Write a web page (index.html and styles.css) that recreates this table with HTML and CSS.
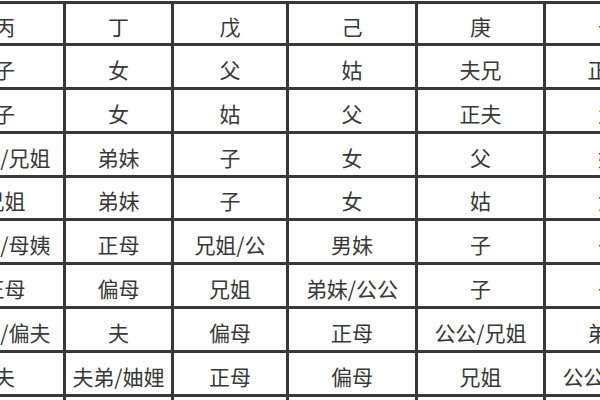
FILE: index.html
```html
<!DOCTYPE html>
<html lang="zh">
<head>
<meta charset="utf-8">
<link rel="stylesheet" href="styles.css">
</head>
<body>
<div class="frame">
  <div class="grid">
    <div class="cell">丙</div><div class="cell">丁</div><div class="cell">戊</div><div class="cell">己</div><div class="cell">庚</div><div class="cell">辛</div>
    <div class="cell">子</div><div class="cell">女</div><div class="cell">父</div><div class="cell">姑</div><div class="cell">夫兄</div><div class="cell">正夫</div>
    <div class="cell">子</div><div class="cell">女</div><div class="cell">姑</div><div class="cell">父</div><div class="cell">正夫</div><div class="cell">父</div>
    <div class="cell">弟妹/兄姐</div><div class="cell">弟妹</div><div class="cell">子</div><div class="cell">女</div><div class="cell">父</div><div class="cell">姑</div>
    <div class="cell">兄姐</div><div class="cell">弟妹</div><div class="cell">子</div><div class="cell">女</div><div class="cell">姑</div><div class="cell">女</div>
    <div class="cell">偏母/母姨</div><div class="cell">正母</div><div class="cell">兄姐/公</div><div class="cell">男妹</div><div class="cell">子</div><div class="cell">子</div>
    <div class="cell">正母</div><div class="cell">偏母</div><div class="cell">兄姐</div><div class="cell">弟妹/公公</div><div class="cell">子</div><div class="cell">子</div>
    <div class="cell">正夫/偏夫</div><div class="cell">夫</div><div class="cell">偏母</div><div class="cell">正母</div><div class="cell">公公/兄姐</div><div class="cell">弟妹</div>
    <div class="cell">夫</div><div class="cell">夫弟/妯娌</div><div class="cell">正母</div><div class="cell">偏母</div><div class="cell">兄姐</div><div class="cell">公公/兄姐</div>
    <div class="cell"></div><div class="cell"></div><div class="cell"></div><div class="cell"></div><div class="cell"></div><div class="cell"></div>
  </div>
</div>
</body>
</html>
```

FILE: styles.css
```css
html, body {
  margin: 0;
  padding: 0;
  background: #ffffff;
}

.frame {
  width: 600px;
  height: 400px;
  overflow: hidden;
  background: #ffffff;
}

.grid {
  display: grid;
  grid-template-columns: 117px 105px 112px 126px 125px 125px;
  grid-template-rows: 39px 41px 41px 41px 40px 41px 41px 41px 41px 40px;
  gap: 3px;
  padding: 3px;
  margin: 1px 0 0 -57px;
  width: max-content;
  background: #383838;
}

.cell {
  background: #ffffff;
  display: flex;
  align-items: center;
  justify-content: center;
  padding-top: 5px;
  box-sizing: border-box;
  white-space: nowrap;
  font-family: "Noto Sans CJK SC", "Liberation Sans", sans-serif;
  font-size: 21px;
  line-height: 1;
  color: #383838;
}
```
